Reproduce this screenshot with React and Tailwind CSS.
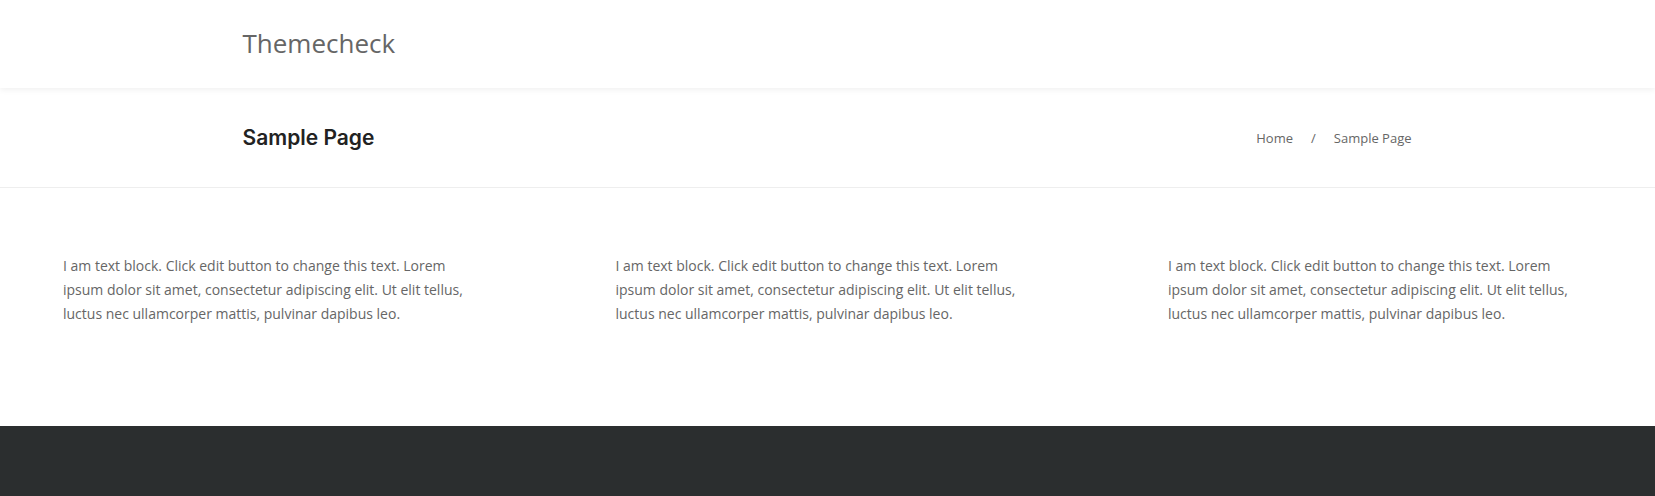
const text =
  'I am text block. Click edit button to change this text. Lorem ipsum dolor sit amet, consectetur adipiscing elit. Ut elit tellus, luctus nec ullamcorper mattis, pulvinar dapibus leo.';

export default function App() {
  return (
    <div className="min-h-[496px] bg-white font-['Open_Sans',sans-serif] flex flex-col">
      {/* Site header */}
      <header className="relative z-10 h-[88px] bg-white shadow-[0_2px_6px_rgba(0,0,0,0.06)]">
        <div className="mx-auto w-[1170px] h-full flex items-center">
          <a href="#" className="text-[26px] leading-none text-[#666666] -mt-[3px]">
            Themecheck
          </a>
        </div>
      </header>

      {/* Page title bar */}
      <div className="h-[100px] border-b border-[#eeeeee]">
        <div className="mx-auto w-[1170px] h-full flex items-center justify-between">
          <h1 className="font-['Inter',sans-serif] font-semibold text-[21px] text-[#222222]">
            Sample Page
          </h1>
          <nav className="flex items-center text-[13px] text-[#666666] mt-[2px] mr-[1px]">
            <a href="#">Home</a>
            <span className="mx-[18px]">/</span>
            <span>Sample Page</span>
          </nav>
        </div>
      </div>

      {/* Content */}
      <main className="grid grid-cols-[552.5px_552.5px_1fr] pt-[66px] pb-[100px]">
        {[0, 1, 2].map((i) => (
          <div key={i} className="pl-[63px] pr-[70px]">
            <p className="text-[14px] leading-[24px] text-[#666666]">{text}</p>
          </div>
        ))}
      </main>

      {/* Footer */}
      <footer className="flex-1 bg-[#2b2e2f]" />
    </div>
  );
}
